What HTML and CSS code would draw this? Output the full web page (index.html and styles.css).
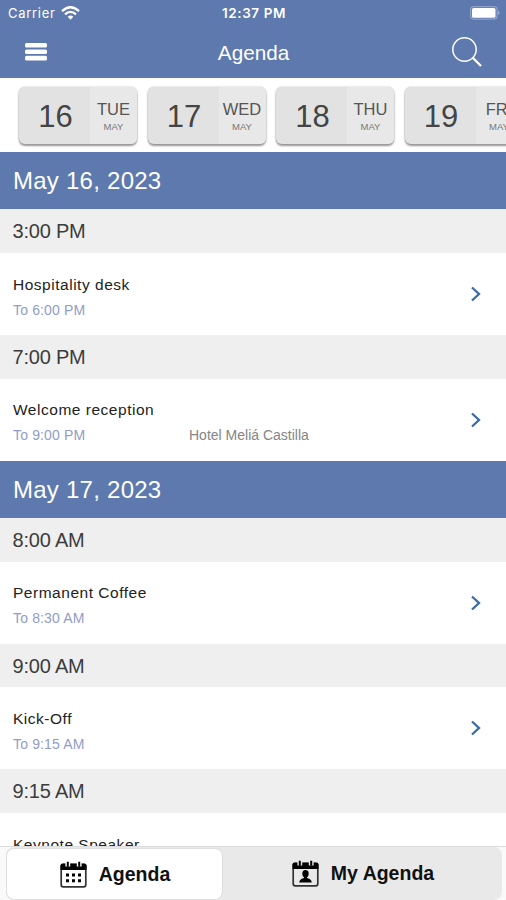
FILE: index.html
```html
<!DOCTYPE html>
<html lang="en">

<head>
    <meta charset="UTF-8">
    <title>Agenda</title>
    <link rel="stylesheet" href="styles.css">
</head>
<body>
    <div class="app">
        <div class="header">
            <div class="status">
                <div class="carrier">
                    <span>Carrier</span>
                    <svg width="19" height="14" viewBox="0 0 19 14">
                        <path d="M1 5.2Q9.500-2.600 18 5.200" fill="none" stroke="#fff" stroke-width="2.400"/>
                        <path d="M4 8.400Q9.500 3.400 15 8.400" fill="none" stroke="#fff" stroke-width="2.300"/>
                        <path d="M6.700 10.800Q9.500 8.300 12.300 10.800L9.500 13.700z" fill="#fff"/>
                    </svg>
                </div>
                <div class="clock">12:37 PM</div>
                <div class="battery">
                    <svg width="30" height="14" viewBox="0 0 30 14">
                        <rect x=".6" y=".6" width="26.500" height="12.500" rx="3" fill="none" stroke="#8fa3cb" stroke-width="1.200"/>
                        <rect x="2" y="2" width="23.500" height="9.700" rx="1.500" fill="#fff"/>
                        <path d="M28.200 4.700q2.600 2.200 0 4.400z" fill="#a9b9da"/>
                    </svg>
                </div>
            </div>
            <div class="navbar">
                <svg width="24" height="20" viewBox="0 0 24 20">
                    <rect x="1" y="1" width="22" height="4.600" rx="1.500" fill="#fff"/>
                    <rect x="1" y="7.400" width="22" height="4.600" rx="1.500" fill="#fff"/>
                    <rect x="1" y="13.800" width="22" height="4.600" rx="1.500" fill="#fff"/>
                </svg>
                <h1 class="title">Agenda</h1>
                <svg width="32" height="32" viewBox="0 0 32 32">
                    <circle cx="13.500" cy="13.500" r="11.700" fill="none" stroke="#fff" stroke-width="1.500"/>
                    <path d="M21.500 21.500L30 30" stroke="#fff" stroke-width="2.300"/>
                </svg>
            </div>
        </div>

        <div class="days">
            <div class="card"><div class="num">16</div><div class="wk">TUE<small>MAY</small></div></div>
            <div class="card"><div class="num">17</div><div class="wk">WED<small>MAY</small></div></div>
            <div class="card"><div class="num">18</div><div class="wk">THU<small>MAY</small></div></div>
            <div class="card"><div class="num">19</div><div class="wk">FRI<small>MAY</small></div></div>
        </div>

        <div class="list">
            <h2 class="date">May 16, 2023</h2>
            <div class="time">3:00 PM</div>
            <div class="item">
                <div class="info">
                    <div class="name">Hospitality desk</div>
                    <div class="sub"><span class="to">To 6:00 PM</span></div>
                </div>
                <svg class="arrow" width="12" height="16" viewBox="0 0 12 16"><path d="M2 1.500L9 8L2 14.500"/></svg>
            </div>
            <div class="time">7:00 PM</div>
            <div class="item">
                <div class="info">
                    <div class="name">Welcome reception</div>
                    <div class="sub"><span class="to">To 9:00 PM</span><span class="place">Hotel Meliá Castilla</span></div>
                </div>
                <svg class="arrow" width="12" height="16" viewBox="0 0 12 16"><path d="M2 1.500L9 8L2 14.500"/></svg>
            </div>
            <h2 class="date">May 17, 2023</h2>
            <div class="time">8:00 AM</div>
            <div class="item">
                <div class="info">
                    <div class="name">Permanent Coffee</div>
                    <div class="sub"><span class="to">To 8:30 AM</span></div>
                </div>
                <svg class="arrow" width="12" height="16" viewBox="0 0 12 16"><path d="M2 1.500L9 8L2 14.500"/></svg>
            </div>
            <div class="time">9:00 AM</div>
            <div class="item">
                <div class="info">
                    <div class="name">Kick-Off</div>
                    <div class="sub"><span class="to">To 9:15 AM</span></div>
                </div>
                <svg class="arrow" width="12" height="16" viewBox="0 0 12 16"><path d="M2 1.500L9 8L2 14.500"/></svg>
            </div>
            <div class="time">9:15 AM</div>
            <div class="item">
                <div class="info">
                    <div class="name">Keynote Speaker</div>
                </div>
            </div>
        </div>

        <div class="tabbar">
            <div class="tabs">
                <div class="tab active">
                    <svg width="27" height="27" viewBox="0 0 27 27">
                        <rect x="1.200" y="3.500" width="24.600" height="22.300" rx="2" fill="none" stroke="#333" stroke-width="1.700"/>
                        <path d="M.5 9V4.500q0-2 2-2h22q2 0 2 2V9z" fill="#000"/>
                        <path d="M7.800 0v5.500M19.200 0v5.500" stroke="#fff" stroke-width="4.800"/>
                        <path d="M7.800 .8v5M19.200 .8v5" stroke="#000" stroke-width="2"/>
                        <path d="M6 14h3M12 14h3M18 14h3M6 19.800h3M12 19.800h3M18 19.800h3" stroke="#000" stroke-width="3"/>
                    </svg>
                    <span>Agenda</span>
                </div>
                <div class="tab">
                    <svg width="27" height="27" viewBox="0 0 27 27">
                        <rect x="1.200" y="3.500" width="24.600" height="22.300" rx="2" fill="none" stroke="#333" stroke-width="1.700"/>
                        <path d="M.5 9V4.500q0-2 2-2h22q2 0 2 2V9z" fill="#000"/>
                        <path d="M7.800 0v5.500M19.200 0v5.500" stroke="#e9e9e9" stroke-width="4.800"/>
                        <path d="M7.800 .8v5M19.200 .8v5" stroke="#000" stroke-width="2"/>
                        <ellipse cx="13.500" cy="13.800" rx="3.200" ry="3.700" fill="#000"/>
                        <path d="M12 16h3v3h-3z" fill="#000"/>
                        <path d="M7.300 22.500q0-3.500 4.500-4.500h3.400q4.500 1 4.500 4.500z" fill="#000"/>
                    </svg>
                    <span>My Agenda</span>
                </div>
            </div>
        </div>
    </div>
</body>

</html>
```
FILE: styles.css
```css
*{
	margin: 0;
	padding: 0;
	box-sizing: border-box;
}

body{
	font-family: "Liberation Sans", Arial, sans-serif;
	background-color: #fff;
	overflow: hidden;
}

.app{
	width: 506px;
	height: 900px;
	display: flex;
	flex-direction: column;
	overflow: hidden;
}

.header{
	height: 78px;
	flex: none;
	background-color: #5d79ae;
	color: #fff;
}

.status{
	height: 26px;
	padding: 0 6px 0 8px;
	display: grid;
	grid-template-columns: 1fr auto 1fr;
	align-items: center;
	font-family: Inter, sans-serif;
	font-size: 13px;
}
.carrier{
	display: flex;
	align-items: center;
	gap: 5px;
	letter-spacing: 0.7px;
}
.clock{
	font-weight: 600;
	font-size: 13.5px;
	letter-spacing: 0.6px;
}
.battery{
	display: flex;
	justify-content: flex-end;
}

.navbar{
	height: 52px;
	padding: 0 23px 0 24px;
	display: grid;
	grid-template-columns: 1fr auto 1fr;
	align-items: center;
}
.navbar svg:last-child{
	justify-self: end;
}
.title{
	font-size: 20.7px;
	font-weight: normal;
	line-height: 25px;
}

.days{
	height: 74px;
	flex: none;
	padding: 9px 0 0 19px;
	display: flex;
	gap: 10.5px;
	overflow: hidden;
}
.card{
	width: 118px;
	height: 57px;
	flex: none;
	display: flex;
	border-radius: 6px;
	background-color: #e2e2e2;
	box-shadow: 0 2px 2px #999, 0 0 2px #bbb;
	overflow: hidden;
}
.num{
	width: 71px;
	padding-left: 2px;
	font-size: 31px;
	line-height: 59px;
	text-align: center;
	color: #444;
}
.wk{
	flex: 1;
	padding-top: 12px;
	background-color: #e8e8e8;
	font-size: 16.5px;
	line-height: 20px;
	text-align: center;
	color: #555;
}
.wk small{
	display: block;
	font-size: 9.5px;
	line-height: 16px;
	color: #777;
}

.list{
	flex: 1;
	min-height: 0;
	overflow: hidden;
}
.date{
	height: 57.3px;
	padding-left: 13px;
	background-color: #5d79ae;
	color: #fff;
	font-size: 24px;
	font-weight: normal;
	letter-spacing: 0.25px;
	line-height: 57px;
}
.time{
	height: 43.8px;
	padding-left: 12.5px;
	background-color: #efefef;
	color: #3c3c3c;
	font-size: 20px;
	letter-spacing: -0.2px;
	line-height: 45px;
}
.item{
	height: 81.9px;
	padding: 0 24px 0 13px;
	display: flex;
	align-items: center;
}
.info{
	height: 82px;
	flex: 1;
	padding-top: 20.5px;
}
.name{
	font-size: 15.5px;
	line-height: 21px;
	letter-spacing: 0.52px;
	color: #222;
}
.sub{
	display: flex;
	font-size: 14px;
	line-height: 30px;
}
.to{
	width: 176px;
	letter-spacing: 0.15px;
	color: #8f9dc9;
}
.place{
	color: #858585;
}
.arrow{
	fill: none;
	stroke: #3b6aa8;
	stroke-width: 2.3;
}

.tabbar{
	height: 54px;
	flex: none;
	padding: 0 4px 0 6px;
	background-color: #fafafa;
	border-top: 1px solid #dcdcdc;
}
.tabs{
	height: 53px;
	display: flex;
	background-color: #e9e9e9;
	border-radius: 8px;
}
.tab{
	flex: 1;
	padding-left: 1.5px;
	display: flex;
	align-items: center;
	justify-content: center;
	gap: 11.5px;
	font-size: 19.5px;
	font-weight: bold;
	color: #111;
}
.active{
	flex: none;
	width: 217px;
	height: 52px;
	margin-top: 1px;
	background-color: #fff;
	border: 1px solid #dedede;
	border-radius: 8px;
}
```
